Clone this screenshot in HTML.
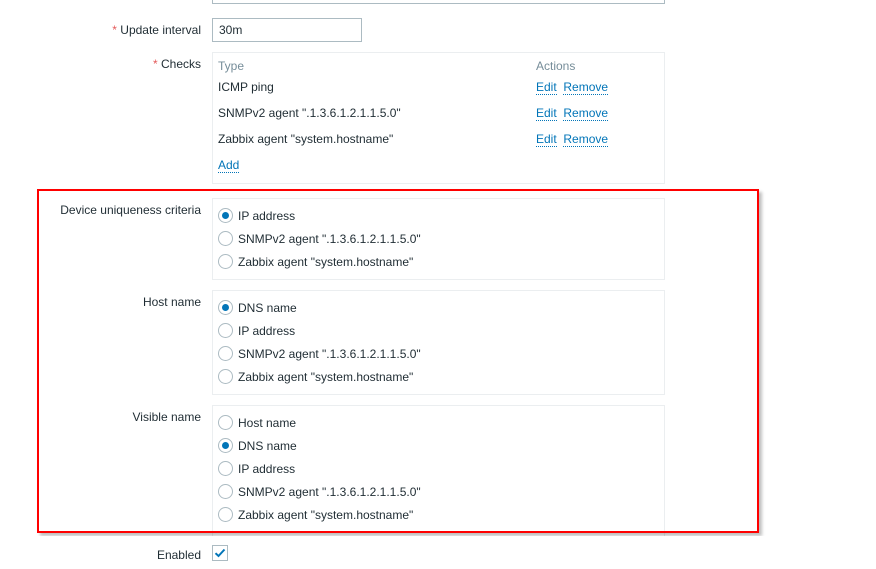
<!DOCTYPE html>
<html><head><meta charset="utf-8"><style>
*{box-sizing:border-box;margin:0;padding:0}
body{width:876px;height:569px;background:#fff;position:relative;overflow:hidden;font-family:"Liberation Sans",Arial,sans-serif;font-size:12px;color:#1f2c33}
.a{position:absolute;white-space:nowrap;line-height:14px}
.lbl{position:absolute;right:675px;white-space:nowrap;line-height:14px;text-align:right}
.req{color:#e45959}
.box{position:absolute;left:212px;width:453px;border:1px solid #ebeef0;background:#fff}
.r{position:absolute;left:218px;width:15px;height:15px;border:1px solid #acbbc2;border-radius:50%;background:#fff;margin-top:1px}
.r.on::after{content:"";position:absolute;left:3px;top:3px;width:7px;height:7px;border-radius:50%;background:#0275b8}
.rt{position:absolute;left:238px;white-space:nowrap;line-height:14px;margin-top:1px}
.lk{color:#0275b8;border-bottom:1px dotted #0275b8}
.gh{color:#768d99}
</style></head><body>
<div style="position:absolute;left:212px;top:-20px;width:453px;height:24px;border:1px solid #acbbc2;background:#fff"></div>
<div class="lbl" style="top:23px"><span class="req">*</span> Update interval</div>
<div style="position:absolute;left:212px;top:18px;width:150px;height:24px;border:1px solid #acbbc2;padding:4px 0 0 6px;line-height:14px">30m</div>
<div class="lbl" style="top:57px"><span class="req">*</span> Checks</div>
<div class="box" style="top:52px;height:132px"></div>
<div class="a gh" style="left:218px;top:59px">Type</div>
<div class="a gh" style="left:536px;top:59px">Actions</div>
<div class="a" style="left:218px;top:80px">ICMP ping</div>
<div class="a" style="left:218px;top:106px">SNMPv2 agent ".1.3.6.1.2.1.1.5.0"</div>
<div class="a" style="left:218px;top:132px">Zabbix agent "system.hostname"</div>
<div class="a" style="left:536px;top:80px"><span class="lk">Edit</span>&nbsp; <span class="lk">Remove</span></div>
<div class="a" style="left:536px;top:106px"><span class="lk">Edit</span>&nbsp; <span class="lk">Remove</span></div>
<div class="a" style="left:536px;top:132px"><span class="lk">Edit</span>&nbsp; <span class="lk">Remove</span></div>
<div class="a" style="left:218px;top:158px"><span class="lk">Add</span></div>

<div class="lbl" style="top:203px">Device uniqueness criteria</div>
<div class="box" style="top:198px;height:82px"></div>
<div class="r on" style="top:207px"></div><div class="rt" style="top:208px">IP address</div>
<div class="r" style="top:230px"></div><div class="rt" style="top:231px">SNMPv2 agent ".1.3.6.1.2.1.1.5.0"</div>
<div class="r" style="top:253px"></div><div class="rt" style="top:254px">Zabbix agent "system.hostname"</div>

<div class="lbl" style="top:295px">Host name</div>
<div class="box" style="top:290px;height:105px"></div>
<div class="r on" style="top:299px"></div><div class="rt" style="top:300px">DNS name</div>
<div class="r" style="top:322px"></div><div class="rt" style="top:323px">IP address</div>
<div class="r" style="top:345px"></div><div class="rt" style="top:346px">SNMPv2 agent ".1.3.6.1.2.1.1.5.0"</div>
<div class="r" style="top:368px"></div><div class="rt" style="top:369px">Zabbix agent "system.hostname"</div>

<div class="lbl" style="top:410px">Visible name</div>
<div class="box" style="top:405px;height:140px"></div>
<div class="r" style="top:414px"></div><div class="rt" style="top:415px">Host name</div>
<div class="r on" style="top:437px"></div><div class="rt" style="top:438px">DNS name</div>
<div class="r" style="top:460px"></div><div class="rt" style="top:461px">IP address</div>
<div class="r" style="top:483px"></div><div class="rt" style="top:484px">SNMPv2 agent ".1.3.6.1.2.1.1.5.0"</div>
<div class="r" style="top:506px"></div><div class="rt" style="top:507px">Zabbix agent "system.hostname"</div>

<div style="position:absolute;left:37px;top:189px;width:722px;height:344px;border:2px solid #ff0000;box-shadow:3px 3px 3px rgba(0,0,0,0.25)"></div>
<div style="position:absolute;left:0;top:536px;width:876px;height:33px;background:#fff"></div>

<div class="lbl" style="top:548px">Enabled</div>
<div style="position:absolute;left:212px;top:545px;width:16px;height:16px;border:1px solid #acbbc2;background:#fff">
<svg width="14" height="14" viewBox="0 0 14 14" style="position:absolute;left:0;top:0"><path d="M2.5 7.2 L5.5 10 L11.5 3.5" fill="none" stroke="#0275b8" stroke-width="2"/></svg>
</div>
</body></html>
